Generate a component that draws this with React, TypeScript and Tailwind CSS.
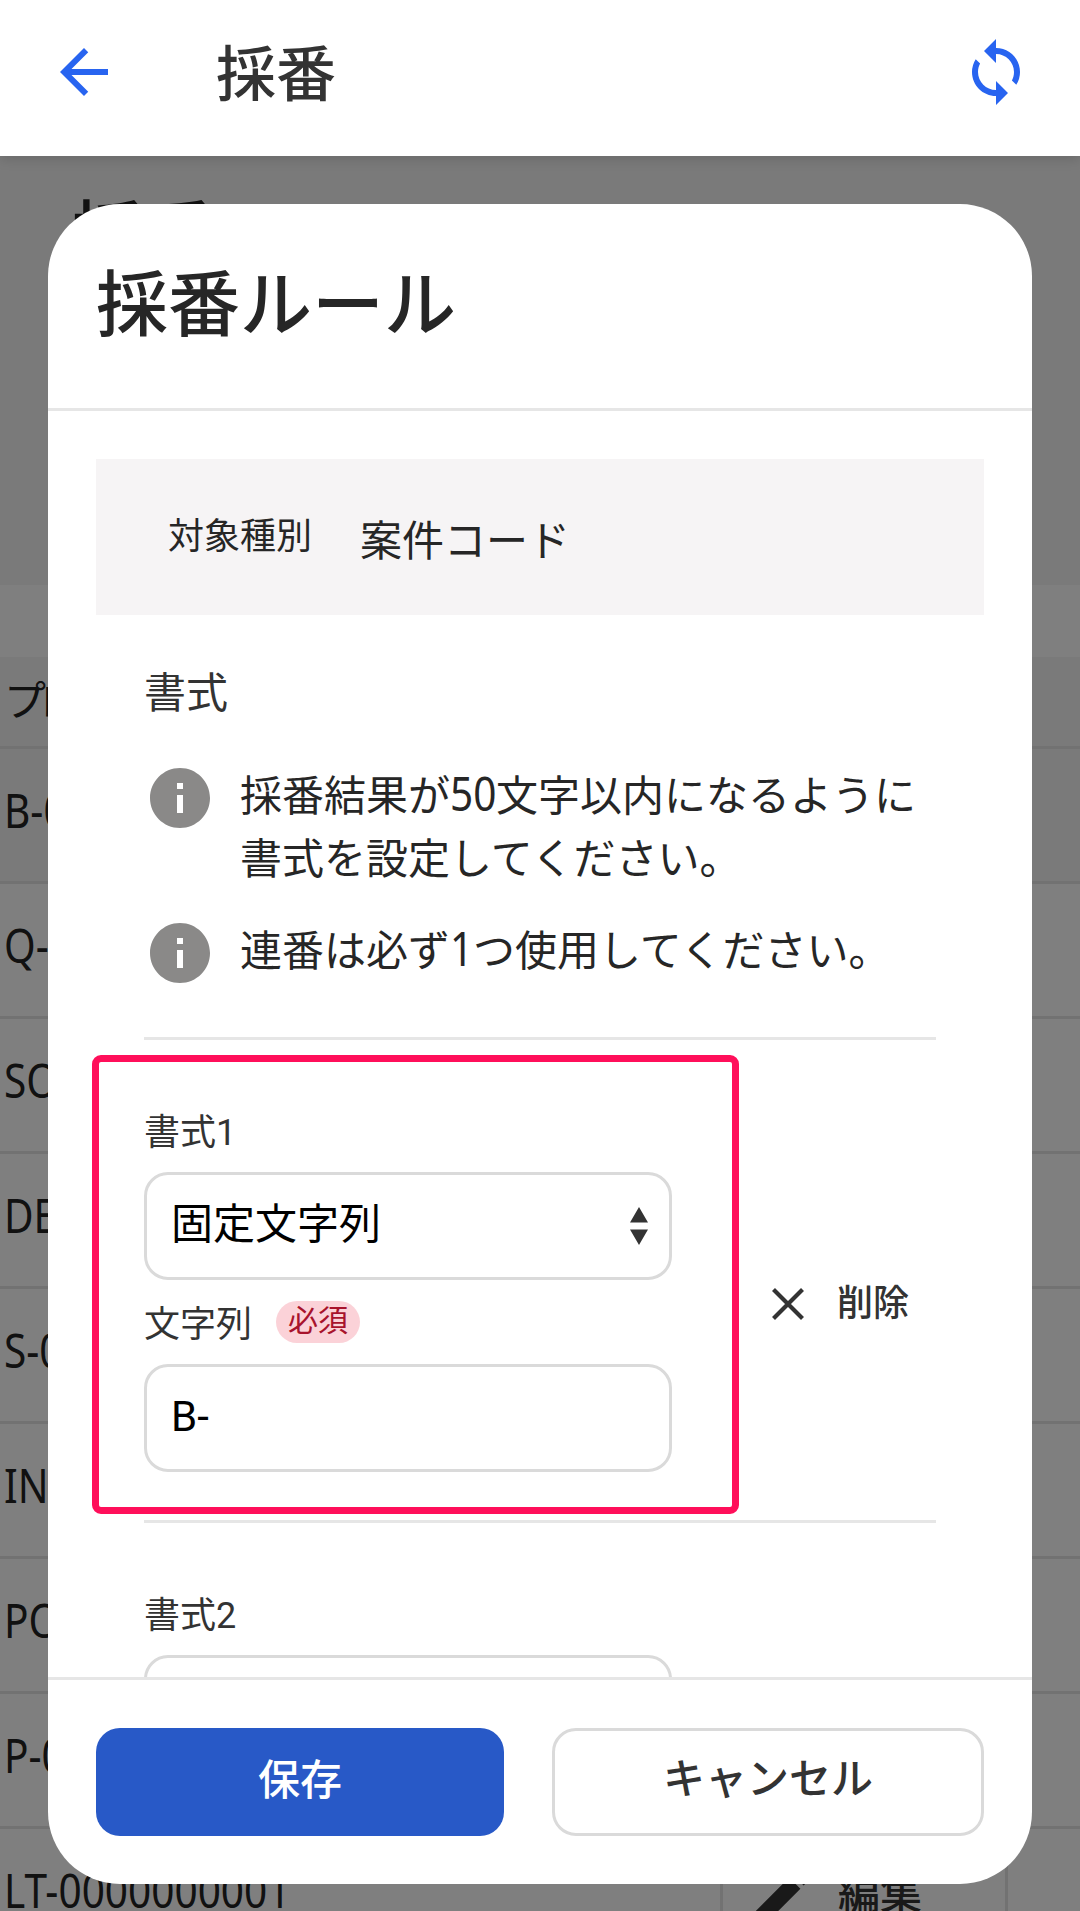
import type { ReactNode } from "react";
import { MdArrowBack, MdEdit, MdInfo, MdSync } from "react-icons/md";

const codes = [
  "B-0000000001",
  "Q-0000000001",
  "SO-0000000001",
  "DE-0000000001",
  "S-0000000001",
  "IN-0000000001",
  "PO-0000000001",
  "P-0000000001",
  "LT-0000000001",
];

function Latin({ children }: { children: ReactNode }) {
  return (
    <span className="inline-block origin-left scale-x-[0.845] whitespace-nowrap font-['Noto_Sans'] text-[48px] leading-none">
      {children}
    </span>
  );
}

function Header() {
  return (
    <header className="relative z-20 flex h-[156px] items-start bg-white px-12 pt-9 shadow-[0_3px_12px_rgba(0,0,0,0.14)]">
      <MdArrowBack className="size-[72px] text-[#2864f0]" />
      <h1 className="ml-24 pt-[2px] text-[60px] font-medium leading-[76px] text-[#333]">採番</h1>
      <MdSync className="ml-auto size-[72px] text-[#2864f0]" />
    </header>
  );
}

function Backdrop() {
  return (
    <div className="h-[1755px] overflow-hidden bg-white text-[#222]">
      <section className="h-[429px] bg-[#f5f5f5] px-[72px] pt-[26px]">
        <h2 className="text-[72px] font-medium leading-[108px]">採番ルール</h2>
      </section>
      <div className="h-[72px]" />
      <div className="flex h-[92px] items-center border-b-[3px] border-[#e4e4e4] bg-[#f5f5f5] pl-1 text-[42px] leading-none -tracking-[6px]">
        プロジェクト
      </div>
      {codes.map((code, i) => (
        <div
          key={code}
          className={`flex h-[135px] border-b-[3px] border-[#e4e4e4] ${i === 0 ? "bg-[#f5f5f5]" : "bg-white"}`}
        >
          <div className="flex w-[720px] items-center pb-[10px] pl-1">
            <Latin>{code}</Latin>
          </div>
          <div className="flex w-[288px] items-center gap-[19px] border-x-[3px] border-[#e4e4e4] pl-6 text-[42px] font-medium leading-none text-[#333]">
            <MdEdit className="size-[72px] shrink-0" />
            編集
          </div>
        </div>
      ))}
    </div>
  );
}

function Note({ children }: { children: ReactNode }) {
  return (
    <div className="flex">
      <MdInfo className="mr-6 size-[72px] shrink-0 text-[#8a8988]" />
      <p className="pt-[3px] text-[42px] leading-[63px]">{children}</p>
    </div>
  );
}

function SelectArrows() {
  return (
    <svg viewBox="0 0 18 38" className="h-[38px] w-[18px]" fill="#333">
      <path d="M9 0 18 15.5H0zM9 38 0 22.5h18z" />
    </svg>
  );
}

function Dialog() {
  return (
    <div className="absolute inset-x-12 top-[204px] z-10 flex h-[1680px] flex-col overflow-hidden rounded-[72px] bg-white text-[#262626]">
      <div className="h-[207px] shrink-0 border-b-[3px] border-[#e6e6e6] px-12 pt-12">
        <h2 className="text-[72px] font-medium leading-[108px]">採番ルール</h2>
      </div>

      <div className="h-[1266px] overflow-hidden px-12 pt-12">
        <div className="flex h-[156px] items-center gap-12 bg-[#f6f4f5] px-[72px]">
          <span className="text-[36px] leading-none">対象種別</span>
          <span className="pt-[9px] text-[42px] leading-none">案件コード</span>
        </div>

        <div className="px-12">
          <h3 className="mt-[47px] text-[42px] leading-[63px] text-[#333]">書式</h3>
          <div className="mt-[37px]">
            <Note>
              採番結果が
              <span className="inline-block w-[46px]">
                <Latin>50</Latin>
              </span>
              文字以内になるように
              <br />
              書式を設定してください。
            </Note>
            <div className="mt-[26px]">
              <Note>
                連番は必ず
                <span className="inline-block w-[23px]">
                  <Latin>1</Latin>
                </span>
                つ使用してください。
              </Note>
            </div>
          </div>

          <div className="mt-12 flex h-[486px] border-y-[3px] border-[#e6e6e6]">
            <div className="relative w-[528px] pt-[66px] text-[#333]">
              <div className="pointer-events-none absolute -left-[52px] top-[15px] h-[459px] w-[647px] rounded-[9px] border-[7px] border-[#ff0f5a]" />
              <label className="block text-[36px] leading-[54px]">書式1</label>
              <div className="mt-3 flex h-[108px] items-center justify-between rounded-3xl border-[3px] border-[#dadada] pl-6 pr-[21px] text-[42px] leading-none text-black">
                <span className="pb-[2px]">固定文字列</span>
                <SelectArrows />
              </div>
              <div className="mt-[17px] flex h-[54px] items-center gap-6">
                <label className="pt-[2px] text-[36px] leading-none">文字列</label>
                <span className="mb-1 h-[42px] rounded-full bg-[#fbd2d8] px-3 text-[30px] leading-[40px] text-[#a8132c]">
                  必須
                </span>
              </div>
              <div className="mt-[13px] flex h-[108px] items-center rounded-3xl border-[3px] border-[#dadada] pb-[2px] pl-6 text-[42px] leading-none text-black">
                B-
              </div>
            </div>
            <button className="ml-[100px] mt-[240px] flex h-12 items-center gap-[33px] text-[36px] font-medium leading-none text-[#333]">
              <svg viewBox="0 0 32 32" className="size-8" stroke="currentColor" strokeWidth="4.2">
                <path d="M1.5 1.5 30.5 30.5M30.5 1.5 1.5 30.5" />
              </svg>
              <span>削除</span>
            </button>
          </div>

          <div className="w-[528px] pt-[66px] text-[#333]">
            <label className="block text-[36px] leading-[54px]">書式2</label>
            <div className="mt-3 h-[108px] rounded-3xl border-[3px] border-[#dadada]" />
          </div>
        </div>
      </div>

      <div className="flex flex-1 gap-12 border-t-[3px] border-[#e6e6e6] px-12 pt-12 text-[42px] font-medium leading-[102px]">
        <button className="h-[108px] w-[408px] rounded-3xl bg-[#2859c7] pb-[2px] text-white">保存</button>
        <button className="flex h-[108px] w-[432px] items-center justify-center rounded-3xl border-[3px] border-[#dadada] pb-[4px] leading-none text-[#333]">
          キャンセル
        </button>
      </div>
    </div>
  );
}

export default function App() {
  return (
    <div lang="ja" className="relative h-[1911px] w-[1080px] overflow-hidden font-['Roboto','Noto_Sans_CJK_JP',sans-serif]">
      <Header />
      <Backdrop />
      <div className="absolute inset-0 bg-black/50" />
      <Dialog />
    </div>
  );
}
